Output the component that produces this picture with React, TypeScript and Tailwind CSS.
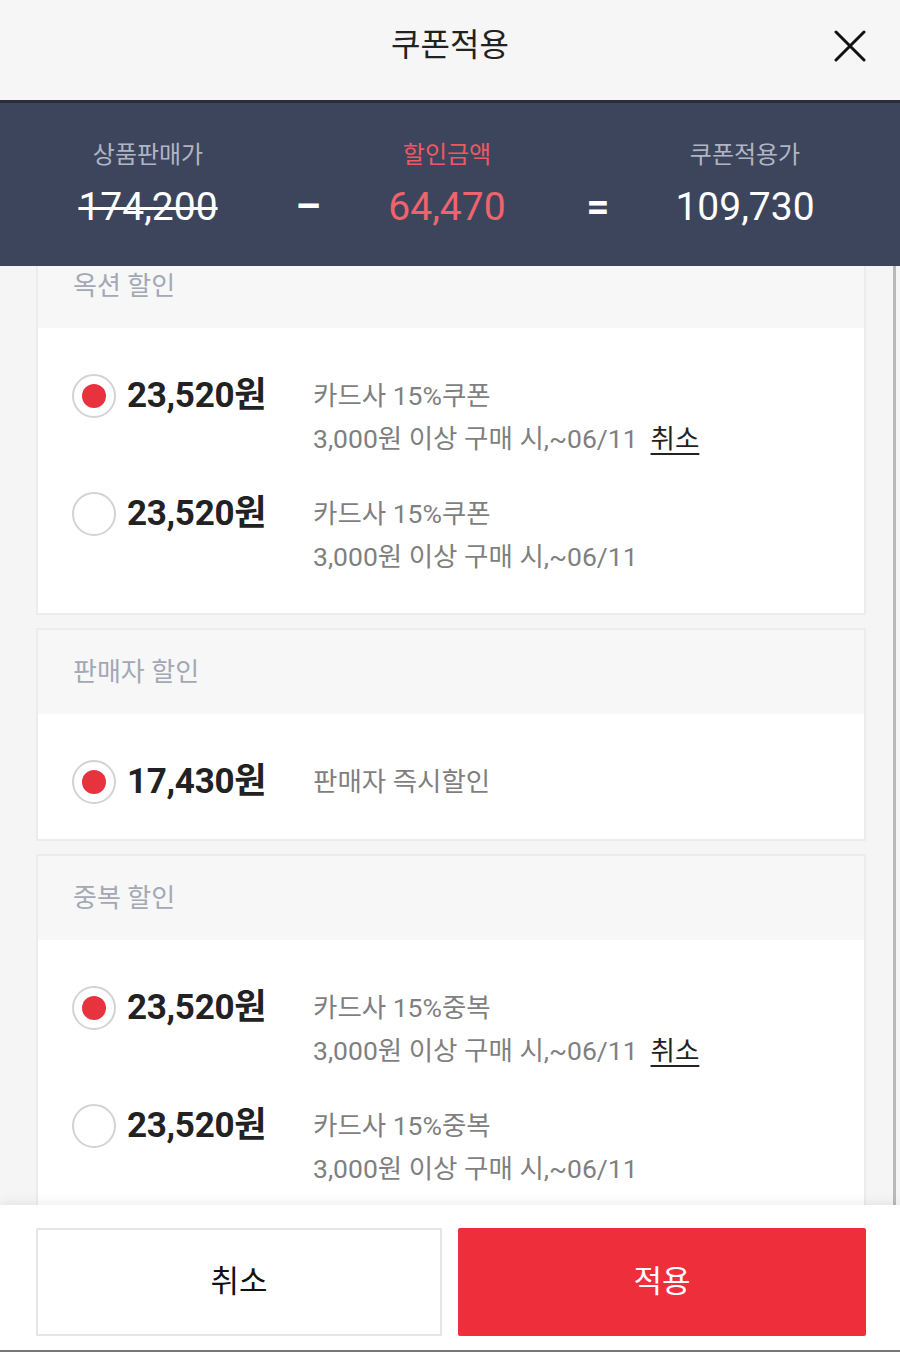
import React from "react";

type Option = {
  amount: string;
  title: string;
  cond?: string;
  selected: boolean;
};

type Group = {
  name: string;
  options: Option[];
};

const groups: Group[] = [
  {
    name: "옥션 할인",
    options: [
      { amount: "23,520", title: "카드사 15%쿠폰", cond: "3,000원 이상 구매 시,~06/11", selected: true },
      { amount: "23,520", title: "카드사 15%쿠폰", cond: "3,000원 이상 구매 시,~06/11", selected: false },
    ],
  },
  {
    name: "판매자 할인",
    options: [{ amount: "17,430", title: "판매자 즉시할인", selected: true }],
  },
  {
    name: "중복 할인",
    options: [
      { amount: "23,520", title: "카드사 15%중복", cond: "3,000원 이상 구매 시,~06/11", selected: true },
      { amount: "23,520", title: "카드사 15%중복", cond: "3,000원 이상 구매 시,~06/11", selected: false },
    ],
  },
];

function Radio({ on }: { on: boolean }) {
  return (
    <div className="w-[44px] h-[44px] shrink-0 rounded-full border-2 border-[#d3d3d3] bg-white flex items-center justify-center">
      {on ? <div className="w-[24px] h-[24px] rounded-full bg-[#e8323d]" /> : null}
    </div>
  );
}

function OptionRow({ o }: { o: Option }) {
  return (
    <div className="flex items-start">
      <Radio on={o.selected} />
      <div className="w-[186px] ml-[11px] shrink-0 text-[35px] leading-[43px] font-bold text-[#222] tracking-[-0.3px]">
        {o.amount}원
      </div>
      <div className="text-[26.5px] leading-[43px] text-[#7f7f7f]">
        <div>{o.title}</div>
        {o.cond ? (
          <div className="flex items-center">
            <span>{o.cond}</span>
            {o.selected ? (
              <span className="ml-[13px] text-[#222] underline underline-offset-[5px] decoration-[2px]">취소</span>
            ) : null}
          </div>
        ) : null}
      </div>
    </div>
  );
}

function GroupCard({ g }: { g: Group }) {
  return (
    <div className="border-2 border-[#ececec] bg-white">
      <div className="h-[84px] flex items-center pl-[35px] bg-[#f7f7f7] text-[26px] text-[#a3a8b5]">
        {g.name}
      </div>
      <div className="pl-[34px] pt-[46px] pb-[35px] flex flex-col gap-[32px]">
        {g.options.map((o, i) => (
          <OptionRow key={i} o={o} />
        ))}
      </div>
    </div>
  );
}

export default function App() {
  return (
    <div className="w-[900px] h-[1352px] flex flex-col overflow-hidden bg-[#f5f5f5] font-[Roboto,'Noto_Sans_CJK_KR',sans-serif]">
      {/* header */}
      <header className="relative h-[100px] shrink-0 flex items-center justify-center bg-[#f6f6f6] pb-[10px]">
        <h1 className="text-[32px] text-[#222] font-normal">쿠폰적용</h1>
        <svg
          className="absolute right-[34px] top-[30px]"
          width="32"
          height="32"
          viewBox="0 0 32 32"
          fill="none"
          stroke="#111"
          strokeWidth="3"
          strokeLinecap="round"
        >
          <path d="M2 2L30 30M30 2L2 30" />
        </svg>
      </header>

      {/* price summary */}
      <section className="h-[166px] shrink-0 border-t-[3px] border-[#2a2e3b] bg-[#3d455d] pt-[36px]">
        <div className="flex items-start">
          <div className="w-[200px] ml-[48px] flex flex-col items-center">
            <div className="text-[24px] leading-[32px] text-[#b0b5c3]">상품판매가</div>
            <div className="mt-[12px] text-[39px] leading-[48px] text-white line-through decoration-[3px]">174,200</div>
          </div>
          <div className="w-[60px] ml-[30px] mt-[44px] text-[40px] leading-[48px] font-bold text-white text-center">–</div>
          <div className="w-[200px] ml-[9px] flex flex-col items-center">
            <div className="text-[24px] leading-[32px] text-[#ef5863]">할인금액</div>
            <div className="mt-[12px] text-[39px] leading-[48px] text-[#f0636c]">64,470</div>
          </div>
          <div className="w-[60px] ml-[21px] mt-[44px] text-[40px] leading-[48px] font-bold text-white text-center">=</div>
          <div className="w-[200px] ml-[17px] flex flex-col items-center">
            <div className="text-[24px] leading-[32px] text-[#b0b5c3]">쿠폰적용가</div>
            <div className="mt-[12px] text-[39px] leading-[48px] text-white">109,730</div>
          </div>
        </div>
      </section>

      {/* coupon list (scrolled) */}
      <div className="relative flex-1 overflow-hidden">
        <div className="-mt-[24px] pl-[36px] pr-[34px] flex flex-col gap-[13px]">
          {groups.map((g) => (
            <GroupCard key={g.name} g={g} />
          ))}
        </div>
        <div className="absolute right-[4px] top-0 bottom-0 w-[3px] bg-[#b9b9b9]" />
      </div>

      {/* footer */}
      <footer className="relative z-10 h-[147px] shrink-0 bg-white pl-[36px] pt-[23px] pb-[14px] border-b-[2px] border-[#777] shadow-[0_-4px_10px_rgba(0,0,0,0.06)] flex gap-[16px]">
        <button className="w-[406px] h-[108px] border-2 border-[#e6e6e6] bg-white text-[31px] text-[#111]">취소</button>
        <button className="w-[408px] h-[108px] rounded-[2px] bg-[#ef2e3b] text-[31px] text-white">적용</button>
      </footer>
    </div>
  );
}
